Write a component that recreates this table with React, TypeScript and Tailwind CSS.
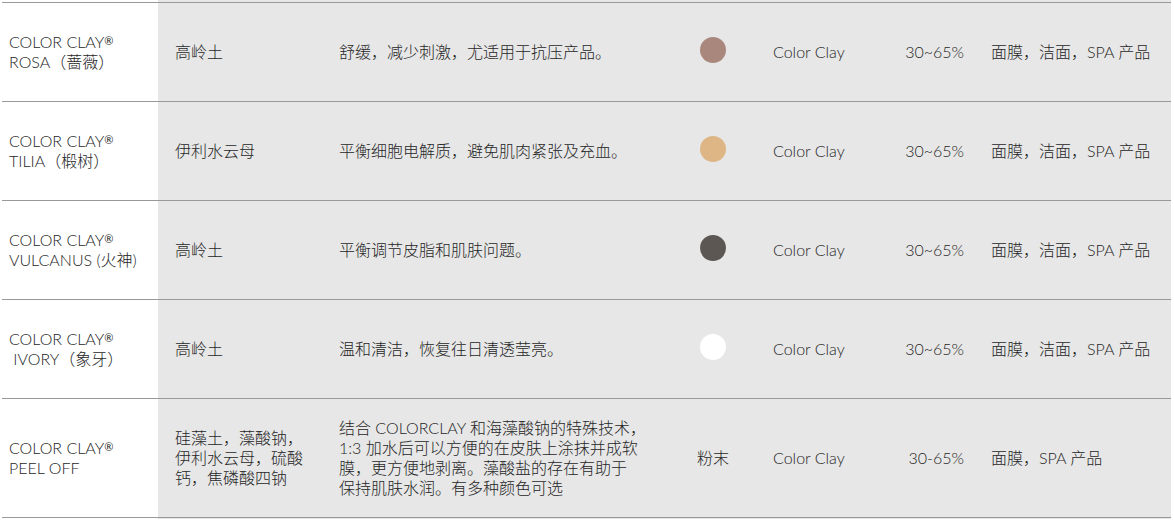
const rows = [
  {
    name: "ROSA（蔷薇）",
    base: ["高岭土"],
    effect: ["舒缓，减少刺激，尤适用于抗压产品。"],
    swatch: "bg-[#a9877d]",
    dose: "30~65%",
    use: "面膜，洁面，SPA 产品",
  },
  {
    name: "TILIA（椴树）",
    base: ["伊利水云母"],
    effect: ["平衡细胞电解质，避免肌肉紧张及充血。"],
    swatch: "bg-[#deb686]",
    dose: "30~65%",
    use: "面膜，洁面，SPA 产品",
  },
  {
    name: "VULCANUS (火神)",
    base: ["高岭土"],
    effect: ["平衡调节皮脂和肌肤问题。"],
    swatch: "bg-[#5d5753]",
    dose: "30~65%",
    use: "面膜，洁面，SPA 产品",
  },
  {
    name: "\u00a0IVORY（象牙）",
    base: ["高岭土"],
    effect: ["温和清洁，恢复往日清透莹亮。"],
    swatch: "bg-white",
    dose: "30~65%",
    use: "面膜，洁面，SPA 产品",
  },
  {
    name: "PEEL OFF",
    base: ["硅藻土，藻酸钠，", "伊利水云母，硫酸", "钙，焦磷酸四钠"],
    effect: [
      "结合 COLORCLAY 和海藻酸钠的特殊技术，",
      "1:3 加水后可以方便的在皮肤上涂抹并成软",
      "膜，更方便地剥离。藻酸盐的存在有助于",
      "保持肌肤水润。有多种颜色可选",
    ],
    swatch: null,
    dose: "30-65%",
    use: "面膜，SPA 产品",
  },
];

export default function App() {
  return (
    <div className="w-[1174px] h-[520px] bg-white">
      <div className="w-[1171px] h-[519px] pl-[2px] pt-[2px] bg-[linear-gradient(to_right,#ffffff_158px,#e7e7e7_158px)] text-[#262626] text-[16px] leading-[20px] font-light font-['Lato','Noto_Sans_CJK_SC',sans-serif]">
        {rows.map((r, i) => (
          <div
            key={i}
            className={`grid grid-cols-[156px_164px_364px_54px_130px_94px_1fr] items-center border-t border-[#999999] ${
              i === rows.length - 1 ? "h-[120px] border-b" : "h-[99px]"
            }`}
          >
            <div className="pl-[7px]">
              <div>
                COLOR CLAY<sup className="text-[11px] font-normal relative -top-[3px]">®</sup>
              </div>
              <div className="whitespace-pre">{r.name}</div>
            </div>
            <div className="pl-[17px]">
              {r.base.map((l) => (
                <div key={l}>{l}</div>
              ))}
            </div>
            <div className="pl-[17px]">
              {r.effect.map((l) => (
                <div key={l} className="whitespace-nowrap">{l}</div>
              ))}
            </div>
            <div className="flex justify-center">
              {r.swatch ? (
                <div className={`w-[26px] h-[26px] rounded-full -mt-[4px] ${r.swatch}`} />
              ) : (
                <span>粉末</span>
              )}
            </div>
            <div className="pl-[33px]">Color Clay</div>
            <div className="text-right">{r.dose}</div>
            <div className="pl-[27px] whitespace-nowrap">{r.use}</div>
          </div>
        ))}
      </div>
    </div>
  );
}
